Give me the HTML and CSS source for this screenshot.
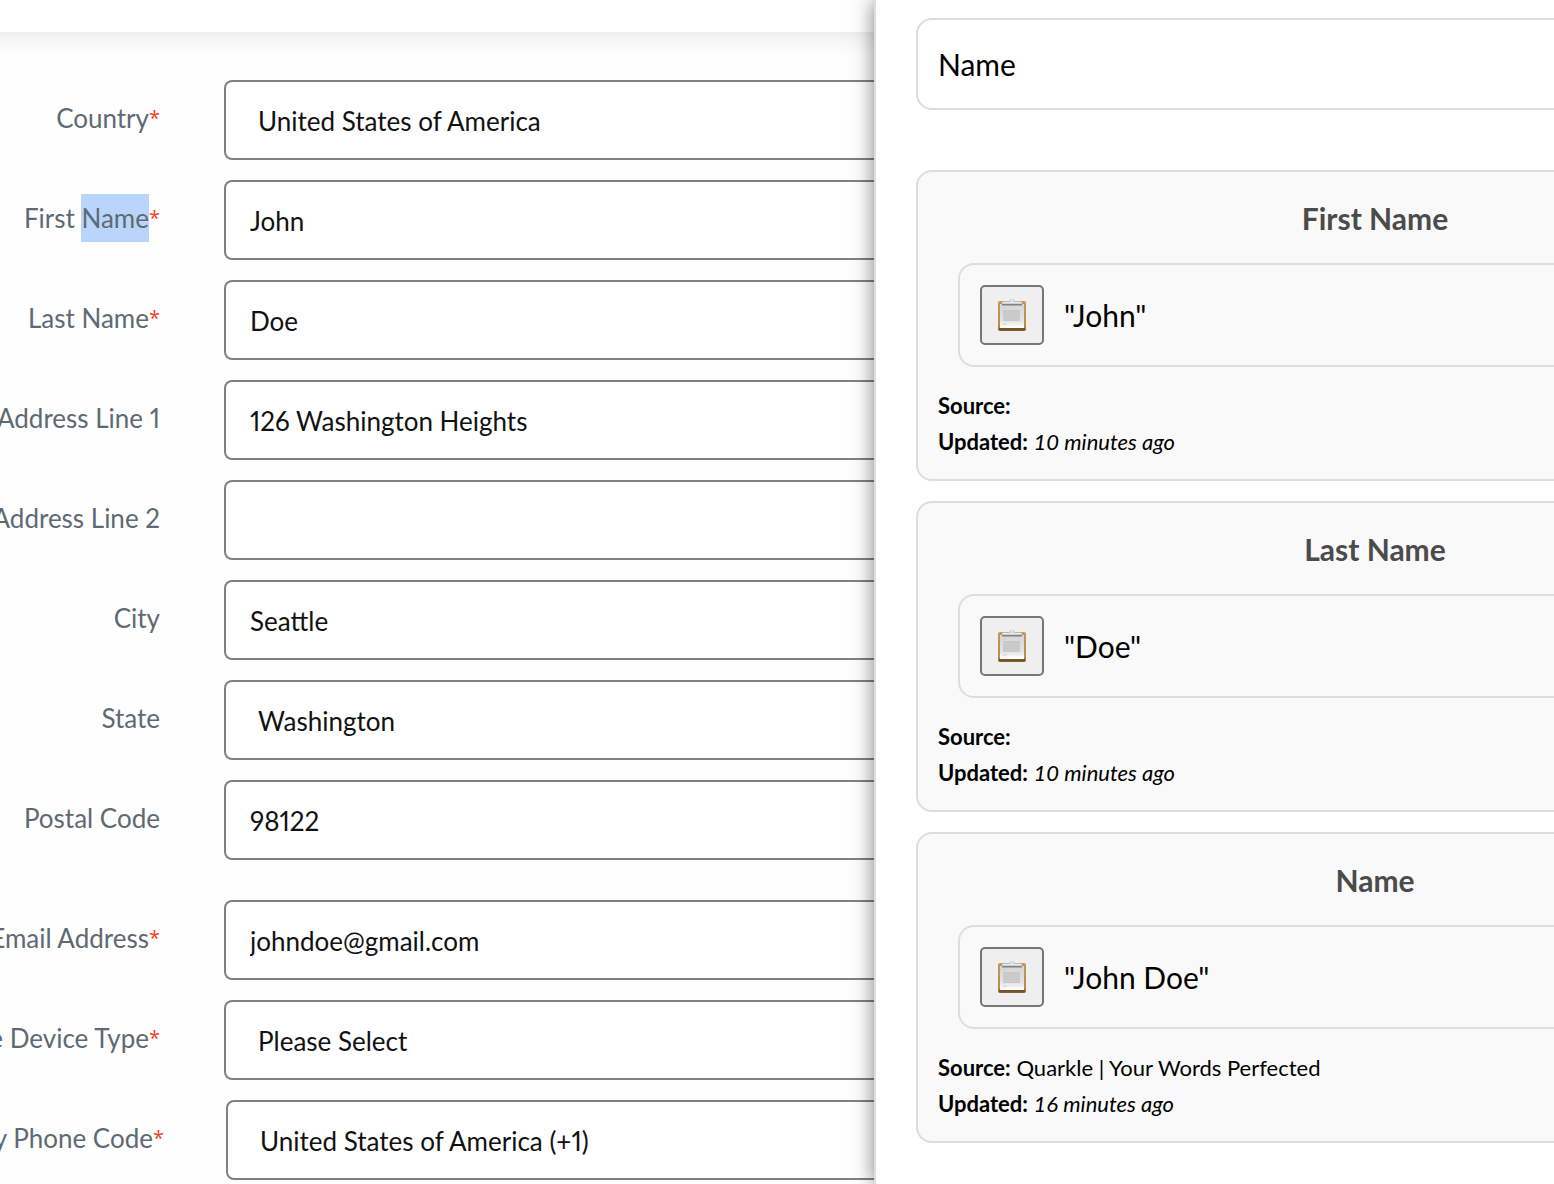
FILE: index.html
```html
<!DOCTYPE html>
<html lang="en">
<head>
<meta charset="utf-8">
<title>Contact details</title>
<meta name="viewport" content="width=device-width, initial-scale=1">
<link rel="stylesheet" href="styles.css">
</head>
<body>
<svg class="sprite" aria-hidden="true">
  <defs>
    <linearGradient id="wood" x1="0" y1="0" x2="0" y2="1">
      <stop offset="0" stop-color="#c39a5b"/>
      <stop offset="0.85" stop-color="#b98a42"/>
      <stop offset="1" stop-color="#7a5a30"/>
    </linearGradient>
    <linearGradient id="paper" x1="0" y1="0" x2="0" y2="1">
      <stop offset="0" stop-color="#d5d5d5"/>
      <stop offset="0.7" stop-color="#e4e4e4"/>
      <stop offset="1" stop-color="#ffffff"/>
    </linearGradient>
  </defs>
  <symbol id="clipboard" viewBox="0 0 28 32">
    <rect x="0" y="2" width="28" height="30" rx="2" fill="url(#wood)"/>
    <rect x="1" y="29" width="26" height="2" fill="#76532a"/>
    <rect x="2" y="5" width="24" height="24" fill="url(#paper)"/>
    <path d="M2 28h24" stroke="#fff" stroke-width="2"/>
    <path d="M5 9h3M5 25h4" stroke="#cfcfcf"/>
    <rect x="5" y="11" width="17" height="11" rx="1" fill="#c8c8c8"/>
    <path d="M5 14h17M5 17h17M5 20h17" stroke="#cecece"/>
    <path d="M4 5.500h20" stroke="#85827e" stroke-width="2"/>
    <path d="M4 5V3.500q0-1 1.500-1H11q0-2.500 3-2.500t3 2.500h5.500q1.500 0 1.500 1V5z" fill="#c9d0d8"/>
    <path d="M5 3.500h18" stroke="#e6ebf0"/>
    <circle cx="14" cy="1.700" r="0.900" fill="#f4f5f7"/>
  </symbol>
</svg>
<div class="page">
  <main class="form-area">
    <header class="topbar"></header>
    <form class="form">
      <div class="row">
        <label class="label" for="country">Country<span class="required">*</span></label>
        <select class="field field-select" id="country"><option>United States of America</option></select>
      </div>
      <div class="row">
        <label class="label" for="first">First&nbsp;<mark class="selected">Name</mark><span class="required">*</span></label>
        <input class="field" id="first" type="text" value="John">
      </div>
      <div class="row">
        <label class="label" for="last">Last Name<span class="required">*</span></label>
        <input class="field" id="last" type="text" value="Doe">
      </div>
      <div class="row">
        <label class="label" for="line1">Address Line 1</label>
        <input class="field" id="line1" type="text" value="126 Washington Heights">
      </div>
      <div class="row">
        <label class="label" for="line2">Address Line 2</label>
        <input class="field" id="line2" type="text">
      </div>
      <div class="row">
        <label class="label" for="city">City</label>
        <input class="field" id="city" type="text" value="Seattle">
      </div>
      <div class="row">
        <label class="label" for="state">State</label>
        <select class="field field-select" id="state"><option>Washington</option></select>
      </div>
      <div class="row">
        <label class="label" for="postal">Postal Code</label>
        <input class="field" id="postal" type="text" value="98122">
      </div>
      <div class="row row-section">
        <label class="label" for="email">Email Address<span class="required">*</span></label>
        <input class="field" id="email" type="email" value="johndoe@gmail.com">
      </div>
      <div class="row">
        <label class="label" for="device">Phone Device Type<span class="required">*</span></label>
        <select class="field field-select" id="device"><option>Please Select</option></select>
      </div>
      <div class="row row-code">
        <label class="label" for="code">Country Phone Code<span class="required">*</span></label>
        <select class="field field-select" id="code"><option>United States of America (+1)</option></select>
      </div>
    </form>
  </main>
  <aside class="panel">
    <input class="search" type="text" value="Name" aria-label="Search saved values">
    <div class="cards">
      <section class="card">
        <h2 class="card-title">First Name</h2>
        <div class="value">
          <button class="copy" type="button" aria-label="Copy"><svg class="copy-icon"><use href="#clipboard"/></svg></button>
          <span>"John"</span>
        </div>
        <div class="meta">
          <p><strong>Source:</strong></p>
          <p><strong>Updated:</strong> <em>10 minutes ago</em></p>
        </div>
      </section>
      <section class="card">
        <h2 class="card-title">Last Name</h2>
        <div class="value">
          <button class="copy" type="button" aria-label="Copy"><svg class="copy-icon"><use href="#clipboard"/></svg></button>
          <span>"Doe"</span>
        </div>
        <div class="meta">
          <p><strong>Source:</strong></p>
          <p><strong>Updated:</strong> <em>10 minutes ago</em></p>
        </div>
      </section>
      <section class="card">
        <h2 class="card-title">Name</h2>
        <div class="value">
          <button class="copy" type="button" aria-label="Copy"><svg class="copy-icon"><use href="#clipboard"/></svg></button>
          <span>"John Doe"</span>
        </div>
        <div class="meta">
          <p><strong>Source:</strong> Quarkle | Your Words Perfected</p>
          <p><strong>Updated:</strong> <em>16 minutes ago</em></p>
        </div>
      </section>
    </div>
  </aside>
</div>
</body>
</html>
```
FILE: styles.css
```css
* {
  box-sizing: border-box;
}

body {
  margin: 0;
  background: #fefefe;
  color: #000;
  font-family: Lato, "Open Sans", sans-serif;
  font-variant-numeric: proportional-nums;
  overflow: hidden;
}

.sprite {
  display: block;
  width: 0;
  height: 0;
}

.page {
  display: flex;
  min-height: 100vh;
}

.form-area {
  flex: 1;
  min-width: 0;
  overflow: hidden;
}

.topbar {
  height: 32px;
  margin: 0 -40px;
  background: #fff;
  box-shadow: 0 0 28px rgba(0, 0, 0, 0.13);
}

.form {
  display: flex;
  flex-direction: column;
  gap: 20px;
  padding-top: 48px;
  margin-right: -40px;
}

.row {
  display: grid;
  grid-template-columns: 160px 1fr;
  column-gap: 64px;
}

.row-section {
  margin-top: 20px;
}

.row-code {
  padding-left: 4px;
  column-gap: 62px;
}

.label {
  display: flex;
  align-items: flex-start;
  justify-content: flex-end;
  padding-top: 14px;
  color: #5e6a73;
  font-size: 26px;
  line-height: 48px;
  white-space: nowrap;
}

.required {
  color: #ee3f22;
  font-family: "Open Sans", sans-serif;
  font-size: 20px;
}

.selected {
  background: #b9d5fb;
  color: inherit;
}

.field {
  width: 100%;
  height: 80px;
  padding: 2px 24px 0;
  border: 2px solid #808080;
  border-radius: 8px;
  background: #fff;
  color: #111;
  font-family: inherit;
  font-size: 26px;
  font-variant-numeric: inherit;
}

.field-select {
  appearance: none;
  padding-left: 32px;
}

.panel {
  flex: none;
  position: relative;
  width: 1000px;
  margin-right: -320px;
  padding: 18px 40px 40px;
  border-left: 2px solid #ddd;
  background: #fff;
  box-shadow: 0 0 20px rgba(0, 0, 0, 0.5);
}

.search {
  display: block;
  width: 100%;
  height: 92px;
  padding: 0 20px;
  border: 2px solid #ddd;
  border-radius: 16px;
  background: #fff;
  color: #000;
  font-family: inherit;
  font-size: 30px;
}

.cards {
  display: flex;
  flex-direction: column;
  gap: 20px;
  padding-top: 60px;
}

.card {
  padding: 20px 20px 19px;
  border: 2px solid #ddd;
  border-radius: 16px;
  background: #f9f9f9;
}

.card-title {
  margin: 0 0 19px;
  color: #4b4b4b;
  font-size: 30px;
  line-height: 52px;
  text-align: center;
}

.value {
  display: flex;
  align-items: center;
  gap: 20px;
  height: 104px;
  margin: 0 20px 21px;
  padding: 0 20px;
  border: 2px solid #ddd;
  border-radius: 16px;
  font-size: 30px;
}

.copy {
  display: flex;
  align-items: center;
  justify-content: center;
  width: 64px;
  height: 60px;
  padding: 0;
  border: 2px solid #767676;
  border-radius: 5px;
  background: #efefef;
}

.copy-icon {
  width: 28px;
  height: 32px;
}

.meta {
  font-size: 22px;
  font-variant-numeric: normal;
  line-height: 36px;
}

.meta p {
  margin: 0;
}
```
